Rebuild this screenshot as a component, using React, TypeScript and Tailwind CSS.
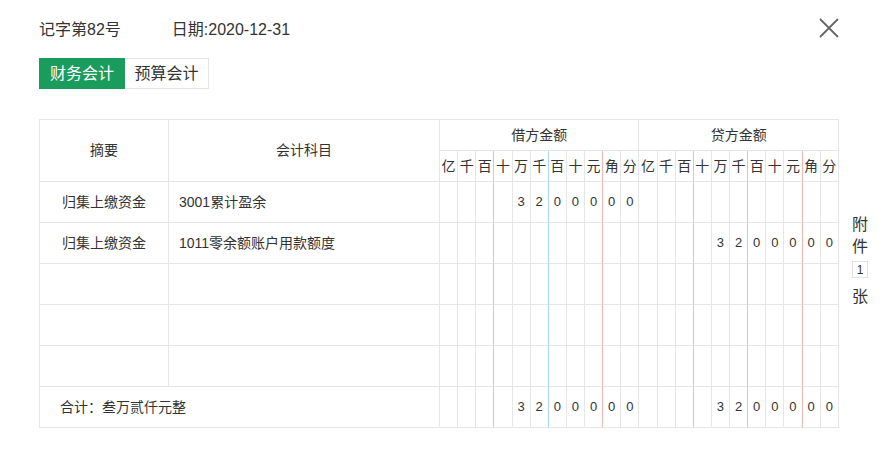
const units = ["亿", "千", "百", "十", "万", "千", "百", "十", "元", "角", "分"];

type Row = { summary: string; subject: string; debit?: string; credit?: string };

const rows: Row[] = [
  { summary: "归集上缴资金", subject: "3001累计盈余", debit: "3200000" },
  { summary: "归集上缴资金", subject: "1011零余额账户用款额度", credit: "3200000" },
  { summary: "", subject: "" },
  { summary: "", subject: "" },
  { summary: "", subject: "" },
];

// right border of the cell before 十 / 百 is blue, before 角 is red
function lineClass(i: number) {
  if (i === 2 || i === 5) return "border-r-[#a9d6f5]";
  if (i === 8) return "border-r-[#f2b3b3]";
  return "border-r-[#e6e6e6]";
}

function digits(value?: string) {
  const padded = (value ?? "").padStart(11, " ");
  return padded.split("").map((d) => (d === " " ? "" : d));
}

function DigitCells({ value }: { value?: string }) {
  return (
    <>
      {digits(value).map((d, i) => (
        <td
          key={i}
          className={`border-b border-r border-b-[#e6e6e6] p-0 text-center text-[13px] text-[#333] ${lineClass(i)}`}
        >
          {d}
        </td>
      ))}
    </>
  );
}

export default function App() {
  return (
    <div
      className="relative h-[459px] w-[880px] bg-white text-[#333]"
      style={{ fontFamily: '"Liberation Sans", "Noto Sans CJK SC", sans-serif' }}
    >
      <button className="absolute right-[41px] top-[18px] h-[20px] w-[20px]" aria-label="close">
        <svg viewBox="0 0 20 20" className="h-[20px] w-[20px]">
          <path d="M1 1 L19 19 M19 1 L1 19" stroke="#666" strokeWidth="1.8" fill="none" />
        </svg>
      </button>

      <div className="flex flex-col px-[39px] pt-[19px]">
        <div className="flex items-center text-[16px] leading-[22px]">
          <span>记字第82号</span>
          <span className="ml-[51px]">日期:2020-12-31</span>
        </div>

        <div className="mt-[17px] flex">
          <button className="h-[31px] w-[86px] bg-[#1a9c5c] text-[16px] leading-[31px] text-white">
            财务会计
          </button>
          <button className="h-[31px] w-[84px] border border-l-0 border-[#e3e3e3] text-[16px] leading-[29px] text-[#333]">
            预算会计
          </button>
        </div>

        <div className="mt-[30px] flex">
          <table className="w-[800px] shrink-0 table-fixed border-separate border-spacing-0 border-l border-t border-[#e6e6e6] text-[14px]">
            <colgroup>
              <col className="w-[129px]" />
              <col className="w-[271px]" />
              {units.concat(units).map((_, i) => (
                <col key={i} />
              ))}
            </colgroup>
            <thead>
              <tr className="h-[31px]">
                <th rowSpan={2} className="border-b border-r border-[#e6e6e6] p-0 text-[14px] font-normal">
                  摘要
                </th>
                <th rowSpan={2} className="border-b border-r border-[#e6e6e6] p-0 text-[14px] font-normal">
                  会计科目
                </th>
                <th colSpan={11} className="border-b border-r border-[#e6e6e6] p-0 text-[14px] font-normal">
                  借方金额
                </th>
                <th colSpan={11} className="border-b border-r border-[#e6e6e6] p-0 text-[14px] font-normal">
                  贷方金额
                </th>
              </tr>
              <tr className="h-[31px]">
                {units.concat(units).map((u, i) => (
                  <th
                    key={i}
                    className={`border-b border-r border-b-[#e6e6e6] p-0 text-[14px] font-normal ${lineClass(i % 11)}`}
                  >
                    {u}
                  </th>
                ))}
              </tr>
            </thead>
            <tbody>
              {rows.map((r, idx) => (
                <tr key={idx} className="h-[41px]">
                  <td className="border-b border-r border-[#e6e6e6] p-0 text-center">{r.summary}</td>
                  <td className="border-b border-r border-[#e6e6e6] py-0 pl-[10px]">{r.subject}</td>
                  <DigitCells value={r.debit} />
                  <DigitCells value={r.credit} />
                </tr>
              ))}
              <tr className="h-[41px]">
                <td colSpan={2} className="border-b border-r border-[#e6e6e6] py-0 pl-[20px]">
                  合计：叁万贰仟元整
                </td>
                <DigitCells value="3200000" />
                <DigitCells value="3200000" />
              </tr>
            </tbody>
          </table>

          <div className="ml-[9px] mt-[95px] flex w-[24px] shrink-0 flex-col items-center text-[16px] leading-[22px]">
            <span>附</span>
            <span>件</span>
            <span className="mt-[3px] flex h-[17px] w-[16px] items-center justify-center border border-[#e3e3e3] text-[12px] leading-none">
              1
            </span>
            <span className="mt-[8px]">张</span>
          </div>
        </div>
      </div>
    </div>
  );
}
